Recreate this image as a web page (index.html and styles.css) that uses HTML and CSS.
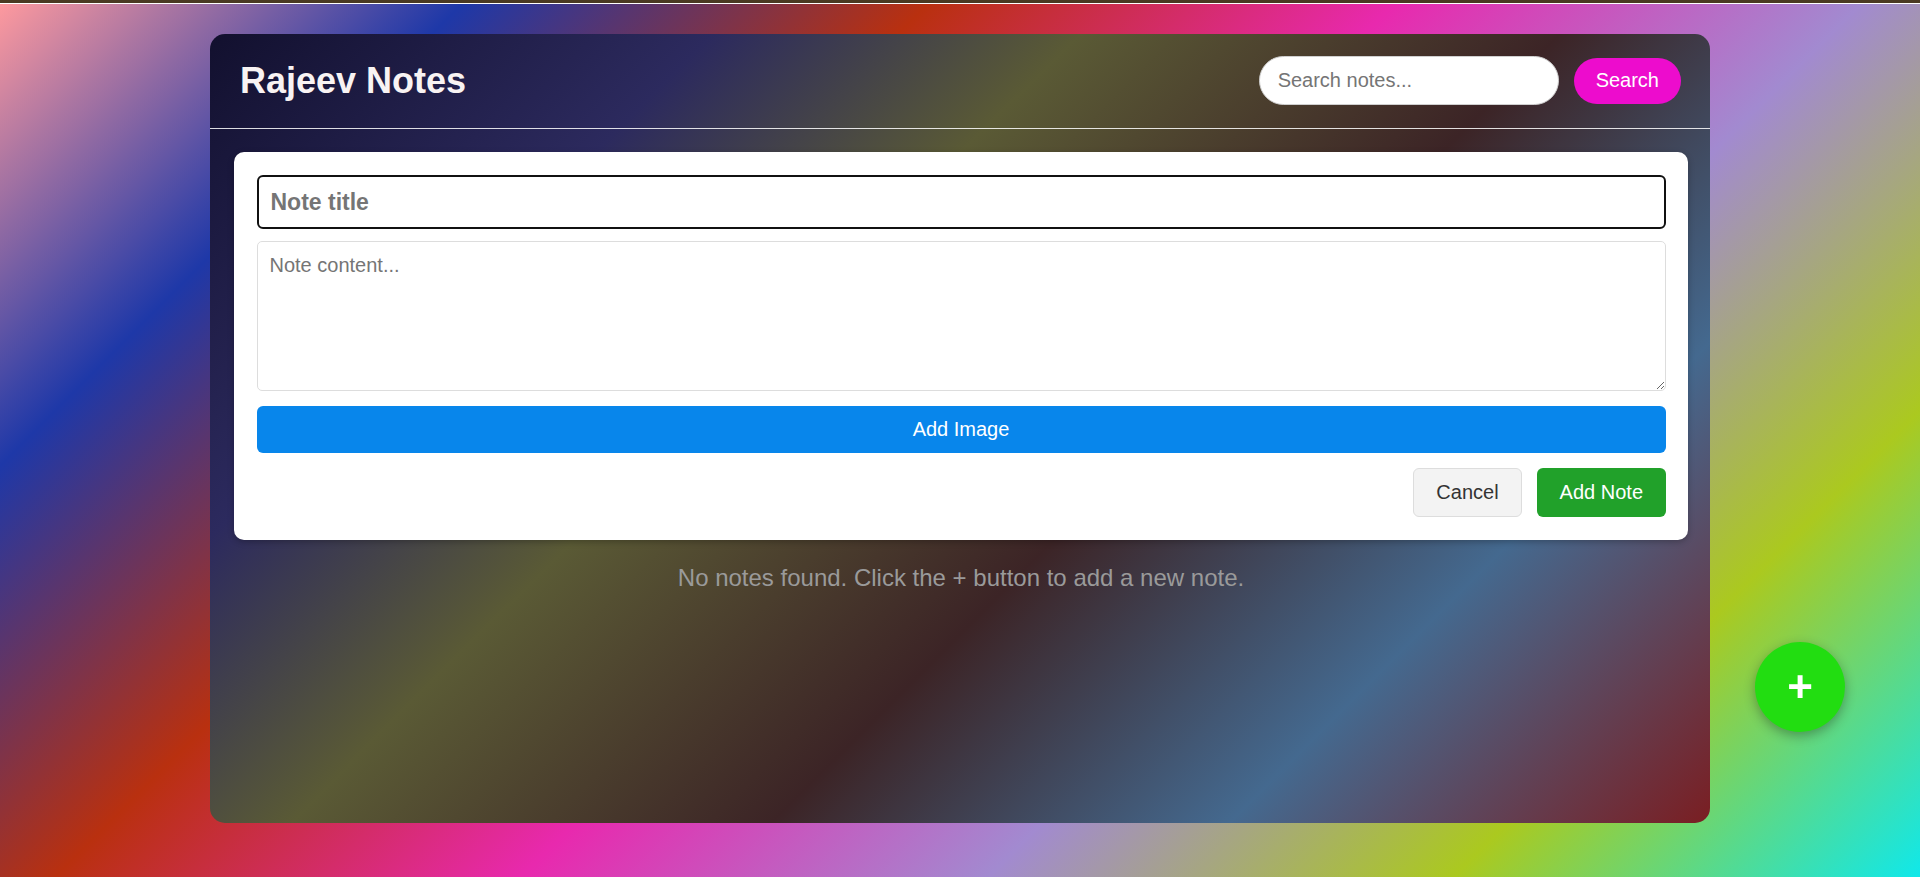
FILE: index.html
```html
<!DOCTYPE html>
<html lang="en">
<head>
<meta charset="utf-8">
<title>Rajeev Notes</title>
<link rel="stylesheet" href="styles.css">
</head>
<body>
<div class="top-strip"></div>
<div class="app">
  <header class="app-header">
    <h1 class="app-title">Rajeev Notes</h1>
    <div class="search">
      <input class="search-input" type="text" placeholder="Search notes...">
      <button class="search-btn" type="button">Search</button>
    </div>
  </header>
  <main class="app-main">
    <form class="note-form">
      <input class="note-title" type="text" placeholder="Note title">
      <textarea class="note-content" placeholder="Note content..."></textarea>
      <button type="button" class="btn-image">Add Image</button>
      <div class="form-actions">
        <button type="button" class="btn-cancel">Cancel</button>
        <button type="button" class="btn-add">Add Note</button>
      </div>
    </form>
    <p class="empty">No notes found. Click the + button to add a new note.</p>
  </main>
</div>
<button class="fab" type="button">+</button>
</body>
</html>
```

FILE: styles.css
```css
* {
  box-sizing: border-box;
}

html {
  min-height: 100%;
  background: linear-gradient(135deg, #ff9a9e 0%, #1e38a8 16.67%, #b9300f 33.33%, #e829ae 50%, #a28ad0 66.67%, #abc91f 83.33%, #10e8ea 100%);
}

body {
  margin: 0;
  font-family: "Liberation Sans", Arial, sans-serif;
}

.top-strip {
  height: 4px;
  background: #4a3a22;
  border-bottom: 1px solid #ffffff;
}

.app {
  max-width: 1500px;
  min-height: 789px;
  margin: 30px auto;
  border-radius: 15px;
  overflow: hidden;
  background: linear-gradient(135deg, #12102e 0%, #2c2a5e 22%, #5a5a35 38%, #3c2426 59%, #44698f 79%, #7a1e22 100%);
}

.app-header {
  display: flex;
  justify-content: space-between;
  align-items: center;
  padding: 22px 29px 23px 30px;
  border-bottom: 1px solid rgba(255, 255, 255, 0.85);
}

.app-title {
  margin: 0;
  font-size: 36px;
  font-weight: bold;
  color: #f8f3f3;
}

.search {
  display: flex;
  align-items: center;
  gap: 15px;
}

.search-input {
  width: 300px;
  height: 49px;
  padding: 0 18px;
  border: 1px solid #cfcfcf;
  border-radius: 25px;
  background: #ffffff;
  font-family: "Liberation Sans", Arial, sans-serif;
  font-size: 20px;
  color: #333;
  outline: none;
}

.search-input::placeholder {
  color: #757575;
}

.search-btn {
  height: 46px;
  padding: 0 22px;
  border: none;
  border-radius: 23px;
  background: #ed0ccd;
  color: #ffffff;
  font-family: "Liberation Sans", Arial, sans-serif;
  font-size: 20px;
}

.app-main {
  padding: 23px 22px 24px 24px;
}

.note-form {
  display: flex;
  flex-direction: column;
  padding: 23px 22.5px;
  background: #ffffff;
  border-radius: 10px;
  box-shadow: 0 2px 6px rgba(0, 0, 0, 0.25);
}

.note-title {
  height: 54px;
  padding: 0 12px;
  border: 2px solid #111111;
  border-radius: 6px;
  font-family: "Liberation Sans", Arial, sans-serif;
  font-size: 23px;
  font-weight: bold;
  color: #333;
  outline: none;
}

.note-title::placeholder {
  color: #757575;
}

.note-content {
  display: block;
  margin-top: 12px;
  height: 150px;
  padding: 12px;
  border: 1px solid #dddddd;
  border-radius: 5px;
  font-family: "Liberation Sans", Arial, sans-serif;
  font-size: 20px;
  color: #333;
  resize: vertical;
  outline: none;
}

.note-content::placeholder {
  color: #757575;
}

.btn-image {
  margin-top: 15px;
  height: 47px;
  border: none;
  border-radius: 6px;
  background: #0886eb;
  color: #ffffff;
  font-family: "Liberation Sans", Arial, sans-serif;
  font-size: 20px;
}

.form-actions {
  display: flex;
  justify-content: flex-end;
  gap: 15px;
  margin-top: 15px;
}

.btn-cancel {
  height: 49px;
  padding: 0 22.5px;
  border: 1px solid #dddddd;
  border-radius: 6px;
  background: #f3f3f3;
  color: #333333;
  font-family: "Liberation Sans", Arial, sans-serif;
  font-size: 20px;
}

.btn-add {
  height: 49px;
  padding: 0 22.5px;
  border: none;
  border-radius: 6px;
  background: #21a12a;
  color: #ffffff;
  font-family: "Liberation Sans", Arial, sans-serif;
  font-size: 20px;
}

.empty {
  margin: 0;
  padding-top: 24px;
  text-align: center;
  color: #9a9a9a;
  font-size: 24px;
}

.fab {
  position: fixed;
  right: 75px;
  bottom: 145px;
  width: 90px;
  height: 90px;
  padding: 0;
  display: flex;
  align-items: center;
  justify-content: center;
  border: none;
  border-radius: 50%;
  background: #22dd11;
  color: #ffffff;
  font-family: "Liberation Sans", Arial, sans-serif;
  font-size: 44px;
  font-weight: bold;
  line-height: 1;
  box-shadow: 0 4px 12px rgba(0, 0, 0, 0.3);
}
```
